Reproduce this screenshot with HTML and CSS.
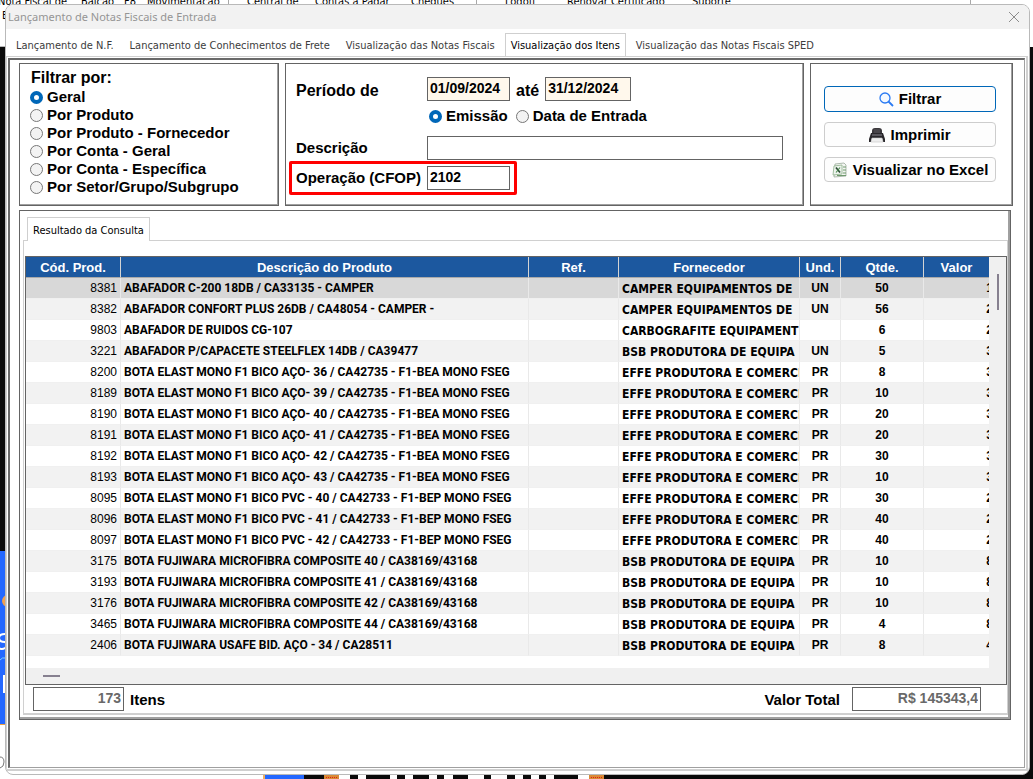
FILE: index.html
```
<!DOCTYPE html>
<html lang="pt-BR">
<head>
<meta charset="utf-8">
<title>Lançamento de Notas Fiscais de Entrada</title>
<link rel="stylesheet" href="styles.css">
</head>
<body>
<div class="desktop">
  <div class="app-menu" aria-hidden="true">
    <span class="menu-item m1">Nota Fiscal de</span><span class="menu-item m2">Balcão</span><span class="menu-item m3">F8</span><span class="menu-item m4">Movimentação</span><span class="menu-item m5">Central de</span><span class="menu-item m6">Contas a Pagar</span><span class="menu-item m7">Cheques</span><span class="menu-item m8">Logoff</span><span class="menu-item m9">Renovar Certificado</span><span class="menu-item m10">Suporte</span>
    <span class="menu-item m11">E</span>
    <span class="divider d1"></span><span class="divider d2"></span><span class="divider d3"></span>
  </div>
  <svg class="strip-left" width="6" height="733" viewBox="0 46 6 733" aria-hidden="true">
    <rect y="46" width="6" height="1" fill="#b8b8b8"/>
    <rect y="47" width="6" height="504" fill="#0a0a0a"/>
    <rect y="551" width="6" height="173" fill="#2468ff"/>
    <rect y="724" width="6" height="1" fill="#f0a040"/>
    <circle cx="8" cy="601" r="6" fill="#f0a050"/>
    <path d="M5 634q-6 0-6 4t6 4q4 3 0 6q-3 2-6 0" fill="none" stroke="#fff" stroke-width="2"/>
    <path d="M0 660q2-3 6-2" fill="none" stroke="#7fd0ff" stroke-width="1"/>
    <rect x="3" y="675" width="2" height="18" fill="#fff"/>
    <path d="M0 757q4 0 4 5t-4 6" fill="none" stroke="#777" stroke-width="1"/>
  </svg>
  <svg class="strip-bottom" width="770" height="4" viewBox="263 0 770 4" aria-hidden="true">
    <rect x="263" width="2" height="4" fill="#f0b060"/>
    <rect x="265" width="39" height="4" fill="#2468ff"/>
    <rect x="304" width="20" height="4" fill="#0a0a0a"/>
    <rect x="324" width="15" height="4" fill="#d98a36"/>
    <path d="M350 2h8M366 2h24M397 2h8M413 2h16M437 2h7M453 2h15M484 2h7M507 2h8M523 2h8M539 2h7M554 2h24" stroke="#0a0a0a" stroke-width="4"/>
    <rect x="589" width="15" height="4" fill="#d98a36"/>
    <path d="M326 2.500h12M591 2.500h12" stroke="#e02010" stroke-dasharray="1 1"/>
    <rect x="604" width="429" height="4" fill="#0a0a0a"/>
  </svg>

  <main class="window">
    <header class="titlebar">
      <h1 class="title">Lançamento de Notas Fiscais de Entrada</h1>
      <button class="close" type="button" aria-label="Fechar"><svg width="12" height="12" viewBox="0 0 12 12"><path d="M1 1l10 10M11 1L1 11" stroke="#8c8c8c" fill="none"/></svg></button>
    </header>
    <nav class="tabs" role="tablist">
      <button class="tab" type="button" role="tab">Lançamento de N.F.</button>
      <button class="tab" type="button" role="tab">Lançamento de Conhecimentos de Frete</button>
      <button class="tab" type="button" role="tab">Visualização das Notas Fiscais</button>
      <button class="tab active" type="button" role="tab" aria-selected="true">Visualização dos Itens</button>
      <button class="tab" type="button" role="tab">Visualização das Notas Fiscais SPED</button>
    </nav>
    <div class="frame"><div class="page">
      <div class="filters">
        <fieldset class="panel filter-by">
          <legend class="filter-title">Filtrar por:</legend>
          <label class="radio"><input type="radio" name="by" checked>Geral</label>
          <label class="radio"><input type="radio" name="by">Por Produto</label>
          <label class="radio"><input type="radio" name="by">Por Produto - Fornecedor</label>
          <label class="radio"><input type="radio" name="by">Por Conta - Geral</label>
          <label class="radio"><input type="radio" name="by">Por Conta - Específica</label>
          <label class="radio"><input type="radio" name="by">Por Setor/Grupo/Subgrupo</label>
        </fieldset>
        <section class="panel criteria">
          <div class="row period">
            <label class="label" for="from">Período de</label>
            <input class="field date" id="from" value="01/09/2024">
            <label class="until" for="to">até</label>
            <input class="field date to" id="to" value="31/12/2024">
          </div>
          <div class="row kinds">
            <label class="radio"><input type="radio" name="kind" checked>Emissão</label>
            <label class="radio"><input type="radio" name="kind">Data de Entrada</label>
          </div>
          <div class="row">
            <label class="label" for="desc">Descrição</label>
            <input class="field wide" id="desc">
          </div>
          <div class="row highlight">
            <label class="label" for="cfop">Operação (CFOP)</label>
            <input class="field date" id="cfop" value="2102">
          </div>
        </section>
        <section class="panel actions">
          <button class="action primary" type="button"><svg width="15" height="15" viewBox="0 0 15 15"><circle cx="6" cy="6" r="5" fill="#f4f9ff" stroke="#2b7bf3" stroke-width="1.300"/><path d="M9.500 9.500l4.500 4.500" stroke="#2b7bf3" stroke-width="1.800"/></svg>Filtrar</button>
          <button class="action print" type="button"><svg width="16" height="16" viewBox="0 0 16 16"><path d="M3 6V4q0-3 3-3h4q3 0 3 3v2z" fill="#3b383c"/><path d="M5 3h6M5 5h6" stroke="#625f66" stroke-width=".7"/><path d="M2 6h12l2 6v3h-2l-1-4H3l-1 4H0v-3z" fill="#29272b"/><path d="M3 8h10" stroke="#8a8890"/><path d="M3 11h10l1 4H2z" fill="#eee" stroke="#c8c8c8" stroke-width=".6"/></svg>Imprimir</button>
          <button class="action excel" type="button"><svg width="16" height="16" viewBox="0 0 16 16"><path d="M3 2l9-1 2 2v11l-12 1z" fill="#f4f6f3" stroke="#9aa99a" stroke-width=".8"/><path d="M11 5h3M11 8h3M11 11h3M5 13.500h9" stroke="#6f9a6d"/><path d="M2 4l8-1v9l-9 1z" fill="#eef4ee" stroke="#8db08a" stroke-width=".8"/><path d="M4 5.500l4 5" stroke="#2b4a34" stroke-width="1.700"/><path d="M8 5.500l-4 5" stroke="#4c8a50" stroke-width="1.200"/></svg>Visualizar no Excel</button>
        </section>
      </div>

      <section class="results">
        <div class="result-tabs"><button class="tab active result-tab" type="button">Resultado da Consulta</button></div>
        <div class="result-page">
          <div class="grid">
            <div class="viewport">
              <table>
                <colgroup><col class="c-code"><col class="c-desc"><col class="c-ref"><col class="c-sup"><col class="c-unit"><col class="c-qty"><col></colgroup>
                <thead><tr><th>Cód. Prod.</th><th>Descrição do Produto</th><th>Ref.</th><th>Fornecedor</th><th>Und.</th><th>Qtde.</th><th>Valor</th></tr></thead>
                <tbody id="rows"></tbody>
              </table>
            </div>
            <div class="vbar"><div class="vthumb"></div></div>
            <div class="hbar"><div class="hthumb"></div></div>
          </div>
          <footer class="totals">
            <input class="field count" id="count" value="173" readonly>
            <label for="count">Itens</label>
            <label class="total-label" for="total">Valor Total</label>
            <input class="field total" id="total" value="R$ 145343,4" readonly>
          </footer>
        </div>
      </section>
    </div></div>
  </main>
</div>
<script src="rows.js"></script>
</body>
</html>
```
FILE: rows.js
```
const CAMPER = "CAMPER EQUIPAMENTOS DE";
const BSB = "BSB PRODUTORA DE EQUIPA";
const EFFE = "EFFE PRODUTORA E COMERCI";
const items = [
  ["8381", "ABAFADOR C-200 18DB / CA33135 - CAMPER", CAMPER, "UN", "50", "1"],
  ["8382", "ABAFADOR CONFORT PLUS 26DB / CA48054 - CAMPER -", CAMPER, "UN", "56", "2"],
  ["9803", "ABAFADOR DE RUIDOS CG-107", "CARBOGRAFITE EQUIPAMENT", "", "6", "2"],
  ["3221", "ABAFADOR P/CAPACETE STEELFLEX 14DB / CA39477", BSB, "UN", "5", "3"],
  ["8200", "BOTA ELAST MONO F1 BICO AÇO- 36 / CA42735 - F1-BEA MONO FSEG", EFFE, "PR", "8", "3"],
  ["8189", "BOTA ELAST MONO F1 BICO AÇO- 39 / CA42735 - F1-BEA MONO FSEG", EFFE, "PR", "10", "3"],
  ["8190", "BOTA ELAST MONO F1 BICO AÇO- 40 / CA42735 - F1-BEA MONO FSEG", EFFE, "PR", "20", "3"],
  ["8191", "BOTA ELAST MONO F1 BICO AÇO- 41 / CA42735 - F1-BEA MONO FSEG", EFFE, "PR", "20", "3"],
  ["8192", "BOTA ELAST MONO F1 BICO AÇO- 42 / CA42735 - F1-BEA MONO FSEG", EFFE, "PR", "30", "3"],
  ["8193", "BOTA ELAST MONO F1 BICO AÇO- 43 / CA42735 - F1-BEA MONO FSEG", EFFE, "PR", "10", "3"],
  ["8095", "BOTA ELAST MONO F1 BICO PVC - 40 / CA42733 - F1-BEP MONO FSEG", EFFE, "PR", "30", "2"],
  ["8096", "BOTA ELAST MONO F1 BICO PVC - 41 / CA42733 - F1-BEP MONO FSEG", EFFE, "PR", "40", "2"],
  ["8097", "BOTA ELAST MONO F1 BICO PVC - 42 / CA42733 - F1-BEP MONO FSEG", EFFE, "PR", "40", "2"],
  ["3175", "BOTA FUJIWARA MICROFIBRA COMPOSITE 40 / CA38169/43168", BSB, "PR", "10", "8"],
  ["3193", "BOTA FUJIWARA MICROFIBRA COMPOSITE 41 / CA38169/43168", BSB, "PR", "10", "8"],
  ["3176", "BOTA FUJIWARA MICROFIBRA COMPOSITE 42 / CA38169/43168", BSB, "PR", "10", "8"],
  ["3465", "BOTA FUJIWARA MICROFIBRA COMPOSITE 44 / CA38169/43168", BSB, "PR", "4", "8"],
  ["2406", "BOTA FUJIWARA USAFE BID. AÇO - 34 / CA28511", BSB, "PR", "8", "4"]
];
const body = document.getElementById("rows");
for (const [code, desc, supplier, unit, qty, value] of items) {
  const row = body.insertRow();
  for (const [name, text] of [["code", code], ["desc", desc], ["ref", ""], ["sup", supplier], ["unit", unit], ["qty", qty], ["value", value]]) {
    const cell = row.insertCell();
    cell.className = name;
    const span = document.createElement("span");
    span.textContent = text;
    cell.append(span);
  }
}
```
FILE: styles.css
```
* { box-sizing: border-box; }
body { margin: 0; background: #fff; color: #000; font-family: "Liberation Sans", Arial, sans-serif; }
button, input { font: inherit; color: inherit; }
.desktop { position: relative; min-height: 100vh; padding: 4px 3px 4px 5px; overflow: hidden; background: linear-gradient(#0a0a0a, #0a0a0a) right 47px / 10px 100% no-repeat #fff; display: flex; }
.app-menu { position: absolute; inset: 0 0 auto 0; height: 24px; font: 11px/14px "DejaVu Sans Condensed", sans-serif; }
.menu-item { position: absolute; top: -5px; white-space: nowrap; }
.m1 { left: -2px; } .m2 { left: 81px; } .m3 { left: 124px; } .m4 { left: 147px; } .m5 { left: 247px; }
.m6 { left: 315px; } .m7 { left: 411px; } .m8 { left: 505px; } .m9 { left: 567px; } .m10 { left: 692px; }
.m11 { left: 2px; top: 9px; }
.divider { position: absolute; top: 0; width: 1px; height: 4px; background: #a8a8a8; }
.d1 { left: 228px; } .d2 { left: 476px; } .d3 { left: 970px; }
.strip-left { position: absolute; left: 0; top: 46px; }
.strip-bottom { position: absolute; left: 263px; bottom: 0; }

.window { position: relative; flex: 1; min-width: 0; display: flex; flex-direction: column; background: #fff; border: 1px solid #b9b9b9; border-radius: 8px; overflow: hidden; padding-bottom: 3px; }
.titlebar { height: 24px; background: #f2f2f2; display: flex; align-items: center; justify-content: space-between; padding: 0 9px 0 2px; }
.title { margin: 0; color: #959595; font: 11px/16px "Noto Sans", sans-serif; }
.close { border: 0; background: none; padding: 0; width: 12px; height: 12px; display: flex; }
.tabs { display: flex; align-items: flex-end; height: 27px; padding-left: 4px; }
.tab { border: 1px solid transparent; border-bottom: 0; background: none; color: #3c3c3c; height: 23px; padding: 2px 5px 0 5px; font: 11px/14px "DejaVu Sans Condensed", sans-serif; white-space: nowrap; margin-right: 4px; }
.tab.active { background: #fff; border-color: #cfcfcf; color: #000; }
.frame { flex: 1; display: flex; border: 2px solid #d0d0d0; border-width: 1px 2px 2px 1px; margin-right: 1px; padding: 1px; }
.page { flex: 1; min-width: 0; border-style: solid; border-width: 2px 1px 1px 2px; border-color: #696969 #a0a0a0 #a0a0a0 #696969; padding: 3px 11px 0 9px; }
.filters { display: grid; grid-template-columns: 260px minmax(0, 1fr) 203px; gap: 6px; height: 143px; }
.panel { margin: 0; border: 1px solid #646464; box-shadow: inset -1px -1px #a0a0a0; min-width: 0; font-weight: bold; font-size: 15px; line-height: 18px; }
.filter-by { padding: 5px 10px; display: flex; flex-direction: column; }
.filter-title { float: left; padding: 0 1px; font-size: 16px; height: 19px; }
.radio { display: flex; align-items: center; gap: 4px; height: 18px; white-space: nowrap; }
.radio input { appearance: none; width: 13px; height: 13px; margin: 0; border: 1px solid #777; border-radius: 50%; background: #f3f3f3; flex: none; }
.radio input:checked { border: 4px solid #0067b8; background: #fff; }
.criteria { padding: 13px 20px 0 10px; }
.row { display: flex; align-items: center; height: 24px; }
.label { width: 131px; flex: none; }
.period { font-size: 16px; }
.period label { padding-top: 3px; }
.field { border: 1px solid #646464; border-radius: 0; background: #fff; height: 24px; padding: 0 2px 3px; font-weight: bold; font-size: 14px; outline: 0; min-width: 0; }
.date { width: 83px; }
.period .field { background: #fff8ec; }
.until { padding: 0 6px; }
.to { width: 86px; }
.kinds { padding-left: 133px; gap: 8px; height: 30px; margin-bottom: 5px; }
.wide { flex: 1; }
.highlight { width: 228px; height: 34px; border: 3px solid #f00; border-radius: 2px; margin: 1px 0 0 -7px; padding-left: 4px; }
.actions { padding: 22px 16px 0 13px; display: flex; flex-direction: column; }
.action { border: 1px solid #cdcdcd; border-radius: 4px; background: #fdfdfd; height: 25px; padding: 0; display: flex; align-items: center; justify-content: center; gap: 5px; font-weight: bold; font-size: 15px; white-space: nowrap; margin-bottom: 10px; }
.primary { border-color: #0067b8; height: 26px; }

.results { margin-top: 4px; border: 1px solid #646464; box-shadow: inset -2px -2px #a0a0a0; padding: 6px 2px 4px 3px; margin-right: 2px; }
.result-tabs { display: flex; height: 23px; padding-left: 4px; }
.result-tab { height: 24px; position: relative; }
.result-page { border: 1px solid #d0d0d0; border-width: 1px 1px 2px; padding: 15px 0 2px 1px; }
.grid { border: 1px solid #646464; display: grid; grid-template-columns: minmax(0, 1fr) 17px; grid-template-rows: 411px 16px; background: #f0f0f0; }
.viewport { overflow: hidden; background: #fff; }
table { border-collapse: separate; border-spacing: 0; table-layout: fixed; width: 100%; }
.c-code { width: 95px; } .c-desc { width: 408px; } .c-ref { width: 90px; } .c-sup { width: 181px; } .c-unit { width: 41px; } .c-qty { width: 83px; }
th { height: 21px; padding: 2px 0 0; background: #1c589f; color: #fff; font-size: 13px; line-height: 18px; border-right: 1px solid #d4d4d4; border-bottom: 1px solid #aaa; }
td { height: 21px; padding: 0 3px; font-size: 12px; line-height: 18px; font-weight: bold; white-space: nowrap; overflow: hidden; border-right: 1px solid #e9e9e9; border-bottom: 1px solid #f0f0f0; }
th:last-child, td:last-child { border-right: 0; }
tbody tr:nth-child(even) { background: #f2f2f2; }
tbody tr:first-child { background: #d8d8d8; }
.code { text-align: right; font-weight: normal; }
.desc { font-family: Roboto, sans-serif; }
.sup { font-family: "DejaVu Sans Condensed", sans-serif; padding-top: 2px; }
.unit, .qty { text-align: center; }
.value { text-align: right; padding: 0; }
.value span { display: inline-block; margin-right: -4px; }
.vthumb { width: 2px; height: 36px; margin: 17px 0 0 8px; background: #86808f; }
.hbar { grid-column: 1 / -1; }
.hthumb { width: 17px; height: 2px; margin: 7px 0 0 17px; background: #86808f; }
.totals { display: flex; align-items: center; padding: 2px 26px 0 8px; font-weight: bold; font-size: 15px; gap: 6px; }
.totals .field { color: #696969; text-align: right; }
.count { width: 91px; } .total { width: 129px; margin-left: 6px; }
.total-label { margin-left: auto; }
```
